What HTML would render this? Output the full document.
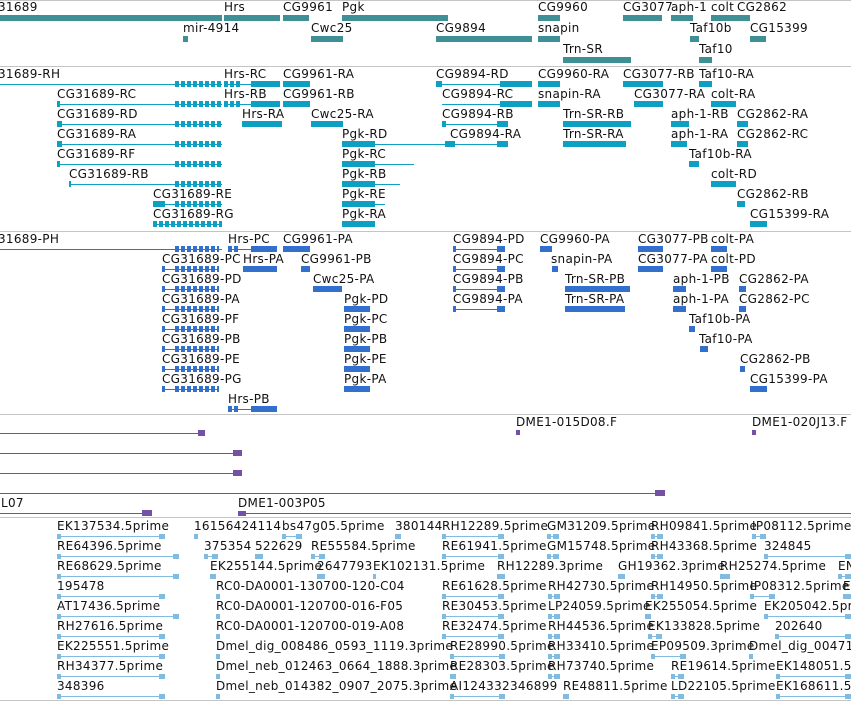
<!DOCTYPE html>
<html><head><meta charset="utf-8"><style>
body{margin:0;width:851px;height:702px;background:#fff;position:relative;overflow:hidden;font-family:"DejaVu Sans","Liberation Sans",sans-serif;font-size:12px;color:#111}
.t{position:absolute;white-space:nowrap;line-height:14px;letter-spacing:0.3px}
.b{position:absolute}
.h{position:absolute;left:0;width:851px;height:1px;background:#c4c4c4}
</style></head><body>
<div class="h" style="top:0px"></div><div class="h" style="top:66px"></div><div class="h" style="top:231px"></div><div class="h" style="top:414px"></div><div class="h" style="top:517px"></div><div class="h" style="top:700px"></div>
<script>
function T(x,y,s){var d=document.createElement('div');d.className='t';d.style.left=x+'px';d.style.top=y+'px';d.textContent=s;document.body.appendChild(d);}
function B(x1,x2,y,h,c){var d=document.createElement('div');d.className='b';d.style.left=x1+'px';d.style.width=Math.max(1,x2-x1)+'px';d.style.top=(y-h/2)+'px';d.style.height=h+'px';d.style.background=c;document.body.appendChild(d);}
function L(x1,x2,y,c){B(x1,x2,y,1,c);}
function E(x1,x2,y,c){var d=document.createElement('div');d.className='b';d.style.left=x1+'px';d.style.width=(x2-x1)+'px';d.style.top=(y-3)+'px';d.style.height='6px';d.style.background='repeating-linear-gradient(90deg,'+c+' 0 4px,transparent 4px 6px)';document.body.appendChild(d);L(x1,x2,y,c);}
var c1='#3f8f97';
[[-2,'31689'],[224,'Hrs'],[283,'CG9961'],[342,'Pgk'],[538,'CG9960'],[623,'CG3077'],[671,'aph-1'],[711,'colt'],[737,'CG2862']].forEach(a=>T(a[0],0,a[1]));
[[0,222],[224,280],[283,309],[342,448],[538,560],[623,662],[671,693],[711,750]].forEach(a=>B(a[0],a[1],18,6,c1));
[[183,'mir-4914'],[311,'Cwc25'],[436,'CG9894'],[538,'snapin'],[690,'Taf10b'],[750,'CG15399']].forEach(a=>T(a[0],21,a[1]));
[[183,188],[311,343],[436,532],[538,560],[690,699],[750,766]].forEach(a=>B(a[0],a[1],39,6,c1));
T(563,42,'Trn-SR');T(699,42,'Taf10');B(563,631,60,6,c1);B(699,712,60,6,c1);
var c2='#0ea0c2';
function r2(k,x,s,l,boxes,ex){var y=84+20*k;T(x,y-17,s);if(l)L(l[0],l[1],y,c2);(boxes||[]).forEach(b=>B(b[0],b[1],y,6,c2));if(ex)E(ex[0],ex[1],y,c2);}
r2(0,-2,'31689-RH',[0,222],[],[175,222]);r2(0,224,'Hrs-RC',[224,280],[[251,280]],[224,240]);r2(0,283,'CG9961-RA',null,[[283,310]]);
r2(0,436,'CG9894-RD',[436,532],[[500,532],[436,442]]);r2(0,538,'CG9960-RA',null,[[538,560]]);r2(0,623,'CG3077-RB',null,[[623,663]]);r2(0,699,'Taf10-RA',null,[[699,712]]);
r2(1,57,'CG31689-RC',[57,222],[[57,60]],[175,222]);r2(1,224,'Hrs-RB',[224,280],[[251,280]],[224,240]);r2(1,283,'CG9961-RB',null,[[283,310]]);
r2(1,442,'CG9894-RC',[442,532],[[500,532]]);r2(1,538,'snapin-RA',null,[[538,560]]);r2(1,634,'CG3077-RA',null,[[634,663]]);r2(1,711,'colt-RA',null,[[711,736]]);
r2(2,57,'CG31689-RD',[57,222],[[57,62]],[175,222]);r2(2,242,'Hrs-RA',null,[[242,282]]);r2(2,311,'Cwc25-RA',null,[[311,343]]);
r2(2,442,'CG9894-RB',[442,508],[[442,446],[497,508]]);r2(2,563,'Trn-SR-RB',null,[[563,631]]);r2(2,671,'aph-1-RB',null,[[671,689]]);r2(2,737,'CG2862-RA',null,[[737,748]]);
r2(3,57,'CG31689-RA',[57,222],[[57,62]],[175,222]);r2(3,342,'Pgk-RD',[342,430],[[342,375]]);r2(3,450,'CG9894-RA',[420,508],[[445,455],[497,508]]);
r2(3,563,'Trn-SR-RA',null,[[563,626]]);r2(3,671,'aph-1-RA',null,[[671,687]]);r2(3,737,'CG2862-RC',null,[[737,748]]);
r2(4,57,'CG31689-RF',[57,222],[[57,60]],[175,222]);r2(4,342,'Pgk-RC',[342,414],[[342,375]]);r2(4,689,'Taf10b-RA',null,[[689,699]]);
r2(5,69,'CG31689-RB',[69,222],[[69,71]],[175,222]);r2(5,342,'Pgk-RB',[342,400],[[342,375]]);r2(5,711,'colt-RD',null,[[711,736]]);
r2(6,153,'CG31689-RE',[153,222],[[153,165]],[175,222]);r2(6,342,'Pgk-RE',[342,385],[[342,375]]);r2(6,737,'CG2862-RB',null,[[737,745]]);
r2(7,153,'CG31689-RG',[153,222],[],[153,222]);r2(7,342,'Pgk-RA',null,[[342,375]]);r2(7,750,'CG15399-RA',null,[[750,767]]);
var c3='#3370cd';
function r3(k,x,s,l,boxes,ex){var y=249+20*k;T(x,y-17,s);if(l)L(l[0],l[1],y,c3);(boxes||[]).forEach(b=>B(b[0],b[1],y,6,c3));if(ex)E(ex[0],ex[1],y,c3);}
r3(0,-2,'31689-PH',[0,222],[],[175,219]);r3(0,228,'Hrs-PC',[228,277],[[251,277]],[228,240]);r3(0,283,'CG9961-PA',null,[[283,310]]);
r3(0,453,'CG9894-PD',[453,505],[[453,456],[497,505]]);r3(0,540,'CG9960-PA',null,[[540,552]]);r3(0,638,'CG3077-PB',null,[[638,663]]);r3(0,711,'colt-PA',null,[[711,727]]);
var p=['PC','PD','PA','PF','PB','PE','PG'];
p.forEach((q,i)=>r3(i+1,162,'CG31689-'+q,[162,219],[[162,165]],[175,219]));
r3(1,243,'Hrs-PA',null,[[243,277]]);r3(1,301,'CG9961-PB',null,[[301,310]]);r3(1,453,'CG9894-PC',[453,505],[[453,456],[497,505]]);
r3(1,551,'snapin-PA',null,[[552,558]]);r3(1,638,'CG3077-PA',null,[[638,663]]);r3(1,711,'colt-PD',null,[[711,727]]);
r3(2,313,'Cwc25-PA',null,[[313,342]]);r3(2,453,'CG9894-PB',[453,505],[[453,456],[497,505]]);r3(2,565,'Trn-SR-PB',null,[[565,630]]);r3(2,673,'aph-1-PB',null,[[673,686]]);r3(2,739,'CG2862-PA',null,[[739,746]]);
['PD','PC','PB','PE','PA'].forEach((q,i)=>r3(i+3,344,'Pgk-'+q,null,[[344,370]]));
r3(3,453,'CG9894-PA',[453,505],[[453,456],[497,505]]);r3(3,565,'Trn-SR-PA',null,[[565,625]]);r3(3,673,'aph-1-PA',null,[[673,686]]);r3(3,739,'CG2862-PC',null,[[739,746]]);
r3(4,689,'Taf10b-PA',null,[[689,695]]);r3(5,699,'Taf10-PA',null,[[700,708]]);r3(6,740,'CG2862-PB',null,[[740,745]]);r3(7,750,'CG15399-PA',null,[[750,767]]);
r3(8,228,'Hrs-PB',[228,277],[[251,277]],[228,240]);
var c4='#7352a6';
T(516,415,'DME1-015D08.F');T(752,415,'DME1-020J13.F');B(516,520,432,5,c4);B(752,756,432,5,c4);
L(0,205,433,c4);B(198,205,433,6,c4);L(0,242,453,c4);B(233,242,453,6,c4);L(0,242,473,c4);B(233,242,473,6,c4);
L(0,665,493,c4);B(655,665,493,6,c4);
T(1,496,'L07');L(0,152,513,c4);B(142,152,513,6,c4);T(238,496,'DME1-003P05');L(238,851,513,c4);B(238,246,513,5,c4);
var c5='#82bbe0';
function r5(k,x,s,w){var y=536+20*k;T(x,y-17,s);if(w>8){L(x,x+w,y,c5);B(x,x+4,y,5,c5);B(x+w-6,x+w,y,5,c5);}else B(x,x+(w||5),y,5,c5);}
['EK137534.5prime','RE64396.5prime','RE68629.5prime','195478','AT17436.5prime','RH27616.5prime','EK225551.5prime','RH34377.5prime','348396'].forEach((s,i)=>r5(i,57,s,[108,122,122,108,122,108,108,108,108][i]));
r5(0,194,'16156424114',4);r5(0,282,'bs47g05.5prime',20);r5(0,395,'380144',6);
r5(1,204,'375354',14);r5(1,255,'522629',8);r5(1,311,'RE55584.5prime',14);
r5(2,210,'EK255144.5prime',6);r5(2,317,'2647793',8);r5(2,373,'EK102131.5prime',3);
['RC0-DA0001-130700-120-C04','RC0-DA0001-120700-016-F05','RC0-DA0001-120700-019-A08','Dmel_dig_008486_0593_1119.3prime','Dmel_neb_012463_0664_1888.3prime','Dmel_neb_014382_0907_2075.3prime'].forEach((s,i)=>r5(i+3,216,s,4));
[[0,442,'RH12289.5prime',62],[1,442,'RE61941.5prime',62],[2,497,'RH12289.3prime',8],[3,442,'RE61628.5prime',62],[4,442,'RE30453.5prime',62],[5,442,'RE32474.5prime',62],[6,450,'RE28990.5prime',55],[7,450,'RE28303.5prime',6],[8,450,'AI124332346899',55],
[0,547,'GM31209.5prime',12],[1,547,'GM15748.5prime',12],[2,618,'GH19362.3prime',7],[3,548,'RH42730.5prime',12],[4,548,'LP24059.5prime',12],[5,548,'RH44536.5prime',12],[6,548,'RH33410.5prime',12],[7,548,'RH73740.5prime',12],[8,563,'RE48811.5prime',6],
[0,651,'RH09841.5prime',12],[1,651,'RH43368.5prime',12],[2,720,'RH25274.5prime',10],[3,651,'RH14950.5prime',12],[4,645,'EK255054.5prime',6],[5,648,'EK133828.5prime',14],[6,651,'EP09509.3prime',35],[7,671,'RE19614.5prime',13],[8,671,'LD22105.5prime',13],
[0,752,'IP08112.5prime',14],[1,764,'324845',87],[2,838,'EN',13],[3,750,'IP08312.5prime',25],[3,843,'E',8],[4,764,'EK205042.5prime',87],[5,775,'202640',76],[6,749,'Dmel_dig_004710',4],[7,776,'EK148051.5prime',75],[8,776,'EK168611.5prime',75]
].forEach(a=>r5(a[0],a[1],a[2],a[3]));
</script>
</body></html>
